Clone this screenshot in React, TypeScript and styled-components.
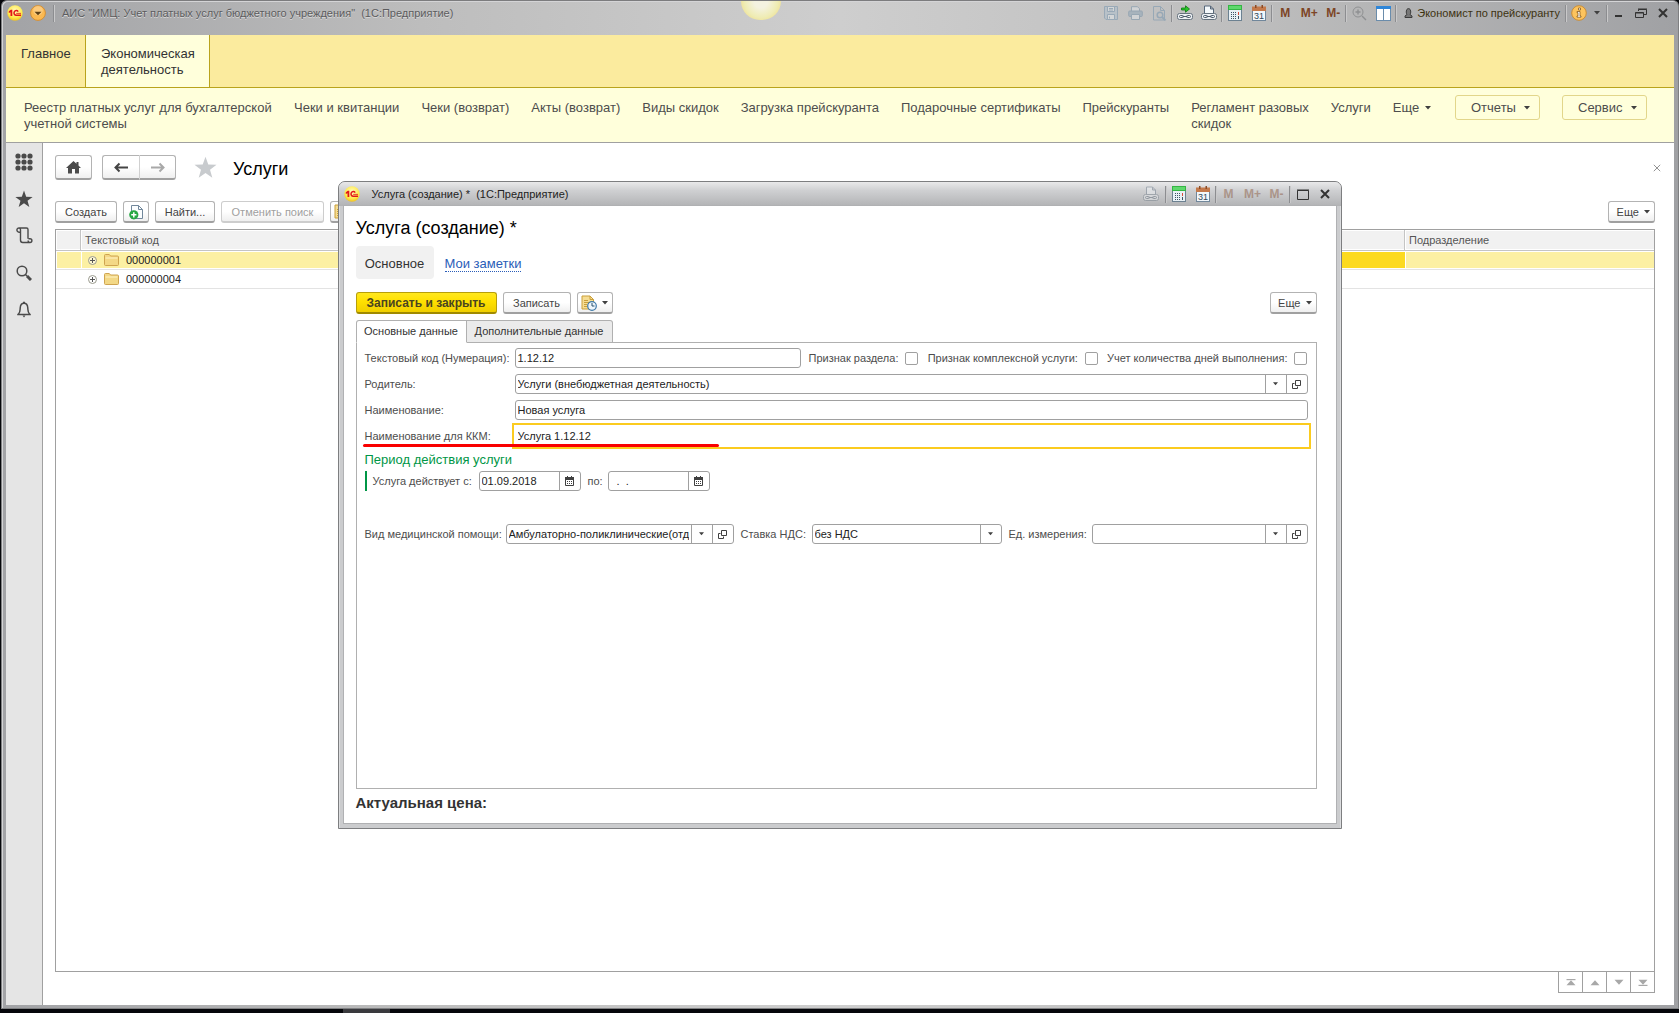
import React from "react";
import styled, { createGlobalStyle, css } from "styled-components";

const Global = createGlobalStyle`
  * { box-sizing: border-box; }
  body { margin: 0; background: #05060a; }
  body, button, input, select, table {
    font-family: "Liberation Sans", Arial, sans-serif;
    font-size: 11px;
    line-height: 14px;
    color: #404040;
  }
  button { padding: 0; margin: 0; background: none; border: 0; }
`;

/* ---------- window frame ---------- */

const Desktop = styled.div`
  position: relative;
  min-height: 100vh;
  padding: 0 0 4px 1px;
  display: flex;
  background: linear-gradient(#3a3a3e, #3a3a3e) 343px 100% / 47px 4px no-repeat, #05060a;
`;

const AppWindow = styled.div`
  position: relative;
  flex: 1;
  min-width: 0;
  display: flex;
  flex-direction: column;
  padding: 0 4px 3px 4px;
  border: 1px solid #7f8082;
  border-top-color: #7c7c7e;
  border-radius: 6px 6px 0 0;
  background: linear-gradient(90deg, #a2a3a6 0%, #bdbdbd 25%, #cecece 50%, #bdbdbd 75%, #a0a1a4 100%);
  box-shadow: inset 1px 1px 0 #d4d4d6;
`;

const TitleBar = styled.header`
  height: 34px;
  flex: none;
  display: flex;
  align-items: flex-start;
  padding-left: 1px;
`;

const TitleLeft = styled.div`
  flex: 1;
  min-width: 0;
  height: 24px;
  display: flex;
  align-items: center;
  gap: 7px;
`;

const TitleText = styled.span`
  color: #5c5c5e;
  white-space: pre;
  text-shadow: 0 1px 0 #d8d8d8;
`;

const Tools = styled.div`
  display: flex;
  align-items: center;
  height: 24px;
`;

const ToolButton = styled.button<{ $dim?: boolean; $w?: number }>`
  width: ${(p) => p.$w ?? 24}px;
  height: 22px;
  display: flex;
  align-items: center;
  justify-content: center;
  opacity: ${(p) => (p.$dim ? 0.4 : 1)};
`;

const MemoryButton = styled(ToolButton)`
  font-size: 12px;
  font-weight: bold;
  color: #7d4526;
`;

const Divider = styled.span`
  width: 2px;
  height: 17px;
  background: #8c8d90;
  border-right: 1px solid #c9c9ca;
`;

const UserButton = styled.button`
  display: flex;
  align-items: center;
  gap: 4px;
  padding: 0 5px 0 7px;
  color: #3d3210;
  white-space: nowrap;
`;

const InfoButton = styled.button`
  display: flex;
  align-items: center;
  gap: 6px;
  padding: 0 5px 0 4px;
`;

const Ball = styled.span`
  position: absolute;
  top: 0;
  left: calc(45% - 15px);
  width: 40px;
  height: 19px;
  border-radius: 0 0 20px 20px;
  background: radial-gradient(circle at 50% 0, #f4f2e0 0 25%, #efecb4 60%, #eedc8c 85%, #e6bd4c 100%);
`;

const Client = styled.div`
  flex: 1;
  display: flex;
  flex-direction: column;
  background: #fff;
`;

/* ---------- section and command panels ---------- */

const Sections = styled.nav`
  display: flex;
  height: 53px;
  background: #fbeb9e;
  border-bottom: 1px solid #b9a31c;
`;

const Section = styled.button<{ $active?: boolean; $w: number }>`
  width: ${(p) => p.$w}px;
  padding: 11px 15px 0 15px;
  display: flex;
  align-items: flex-start;
  text-align: left;
  font-size: 13px;
  line-height: 16px;
  color: #333;
  border-right: 1px solid #b9a31c;
  background: ${(p) => (p.$active ? "#ffffdb" : "transparent")};
`;

const Commands = styled.nav`
  display: flex;
  align-items: flex-start;
  gap: 22px;
  height: 55px;
  padding: 7px 27px 0 18px;
  background: #ffffdb;
  border-bottom: 1px solid #a0a0a0;
`;

const Command = styled.a<{ $w?: number }>`
  flex: none;
  ${(p) => p.$w && css`width: ${p.$w}px;`}
  padding-top: 5px;
  font-size: 13px;
  line-height: 16px;
  color: #4d4d4d;
  text-decoration: none;
  white-space: pre-line;
`;

const CommandMore = styled.button`
  flex: none;
  display: flex;
  align-items: center;
  gap: 6px;
  padding-top: 5px;
  font-size: 13px;
  line-height: 16px;
  color: #4d4d4d;
`;

const CommandMenus = styled.div`
  flex: 1;
  display: flex;
  justify-content: flex-end;
  gap: 22px;
`;

const CommandMenu = styled.button`
  height: 25px;
  width: 85px;
  flex: none;
  display: flex;
  align-items: center;
  justify-content: space-between;
  padding: 0 9px 0 15px;
  font-size: 13px;
  line-height: 16px;
  color: #4d4d4d;
  border: 1px solid #e2d68a;
  border-radius: 3px;
`;

/* ---------- work area ---------- */

const Body = styled.div`
  flex: 1;
  display: flex;
`;

const SideBar = styled.aside`
  width: 37px;
  flex: none;
  display: flex;
  flex-direction: column;
  align-items: center;
  padding-top: 8px;
  gap: 16px;
  background: #e5e5e5;
  border-right: 1px solid #a0a0a0;
`;

const SideButton = styled.button`
  width: 22px;
  height: 21px;
  display: flex;
  align-items: center;
  justify-content: center;
`;

const Page = styled.main`
  flex: 1;
  min-width: 0;
  display: flex;
  flex-direction: column;
  padding: 12px 19px 12px 12px;
`;

const PageHeader = styled.div`
  display: flex;
  align-items: center;
  height: 25px;
  margin-right: -6px;
`;

const Title = styled.h1`
  margin: 0;
  font-size: 18px;
  line-height: 22px;
  font-weight: normal;
  color: #000;
`;

const PageTitle = styled(Title)`
  flex: 1;
  padding: 2px 0 0 16px;
`;

const Button = styled.button<{ $w?: number; $tall?: boolean; $primary?: boolean; $split?: boolean }>`
  width: ${(p) => (p.$w ? `${p.$w}px` : "auto")};
  height: ${(p) => (p.$tall ? 25 : 22)}px;
  flex: none;
  display: inline-flex;
  align-items: center;
  justify-content: ${(p) => (p.$split ? "flex-end" : "center")};
  padding-right: ${(p) => (p.$split ? 4 : 0)}px;
  gap: ${(p) => (p.$split ? 5 : 0)}px;
  white-space: nowrap;
  color: #444;
  background: linear-gradient(#fff 0%, #fff 50%, #efefef 100%);
  border: 1px solid #b3b3b3;
  border-bottom: 2px solid #a0a0a0;
  border-radius: 3px;
  &:disabled {
    color: #a0a0a0;
    border-color: #cdcdcd;
  }
  ${(p) =>
    p.$primary &&
    css`
      font-size: 12px;
      font-weight: bold;
      color: #4a4420;
      background: linear-gradient(#ffe81f, #ffe000 45%, #f0cf00);
      border-color: #b79f0a;
      border-bottom-color: #a08a00;
    `}
`;

const HistoryGroup = styled.div`
  display: flex;
  margin-left: 10px;
  margin-right: 18px;
  ${Button} + ${Button} {
    border-left: 0;
    border-radius: 0 3px 3px 0;
  }
  ${Button}:first-child {
    border-radius: 3px 0 0 3px;
    border-right-color: #d0d0d0;
  }
`;

const CommandBar = styled.div`
  display: flex;
  gap: 6px;
`;

const ListBar = styled(CommandBar)`
  margin: 21px 0 6px;
`;

const Spring = styled.span`
  flex: 1;
`;

const ListFrame = styled.div`
  flex: 1;
  border: 1px solid #a0a0a0;
`;

const List = styled.table`
  width: 100%;
  table-layout: fixed;
  border-collapse: separate;
  border-spacing: 0;
`;

const Head = styled.th`
  height: 21px;
  padding: 1px 0 1px 1px;
  text-align: left;
  font-weight: normal;
  color: #555;
  background: #f1f1f1;
  background-clip: content-box;
  border-bottom: 1px solid #c4c4c4;
  border-right: 1px solid #c4c4c4;
  &:last-child { border-right: 0; }
`;

const CellInner = styled.div<{ $pad?: number }>`
  height: 100%;
  display: flex;
  align-items: center;
  padding-left: ${(p) => p.$pad ?? 3}px;
`;

const HeadInner = styled(CellInner)`
  height: 18px;
`;

const Cell = styled.td<{ $tone?: string }>`
  height: 19px;
  padding: 1px 0 1px 1px;
  background: ${(p) => p.$tone ?? "#fff"};
  background-clip: content-box;
  border-bottom: 1px solid #e3e3e3;
  color: #222;
`;

const RowInner = styled(CellInner)`
  height: 16px;
  gap: 7px;
`;

const Pager = styled.div`
  align-self: flex-end;
  display: flex;
  height: 21px;
  border: 1px solid #a0a0a0;
  border-top: 0;
`;

const PagerButton = styled.button`
  width: 24px;
  display: flex;
  align-items: center;
  justify-content: center;
  border-right: 1px solid #a0a0a0;
  &:last-child { border-right: 0; width: 23px; }
`;

/* ---------- dialog ---------- */

const Overlay = styled.div`
  position: absolute;
  inset: 0 0 3px 0;
  display: flex;
  align-items: center;
  justify-content: center;
`;

const Dialog = styled.section`
  width: 1004px;
  height: 648px;
  display: flex;
  flex-direction: column;
  padding: 0 5px 5px;
  border: 1px solid #7d7e80;
  border-radius: 7px 7px 0 0;
  background: #cbccce;
  box-shadow: inset 1px 0 0 #dcdddf, inset -1px 0 0 #dcdddf;
`;

const DialogBar = styled.header`
  height: 24px;
  flex: none;
  display: flex;
  align-items: center;
  margin: 0 -5px;
  padding: 0 6px 0 5px;
  border-radius: 6px 6px 0 0;
  background: linear-gradient(#e9e9ea, #cfd0d2 35%, #b2b3b5);
`;

const DialogTitle = styled.span`
  flex: 1;
  padding-left: 12px;
  color: #222;
  white-space: pre;
`;

const DialogBody = styled.div`
  flex: 1;
  display: flex;
  flex-direction: column;
  padding: 11px 19px 12px 12px;
  background: #fff;
  box-shadow: 0 0 0 1px #b0b1b3;
`;

const FormNav = styled.nav`
  display: flex;
  align-items: center;
  gap: 11px;
  margin: 7px 0 13px;
  font-size: 13px;
  line-height: 16px;
`;

const FormNavCurrent = styled.span`
  height: 33px;
  width: 78px;
  display: flex;
  align-items: center;
  justify-content: center;
  padding-top: 2px;
  color: #333;
  background: #f1f1f1;
  border-radius: 4px;
`;

const FormNavLink = styled.a`
  padding-top: 2px;
  color: #2a5db8;
  text-decoration: none;
  line-height: 15px;
  border-bottom: 1px dotted #2a5db8;
`;

const Tabs = styled.div`
  display: flex;
  margin-top: 6px;
`;

const Tab = styled.button<{ $active?: boolean; $w: number }>`
  width: ${(p) => p.$w}px;
  height: 23px;
  padding-bottom: 1px;
  color: #333;
  white-space: nowrap;
  border: 1px solid #b0b0b0;
  border-bottom-color: ${(p) => (p.$active ? "#fff" : "#b0b0b0")};
  border-left-width: ${(p) => (p.$active ? 1 : 0)}px;
  border-radius: ${(p) => (p.$active ? "3px 0 0 0" : "0 3px 0 0")};
  background: ${(p) => (p.$active ? "#fff" : "#ebebeb")};
  position: relative;
  z-index: 1;
`;

const Panel = styled.form`
  flex: 1;
  margin: -1px 0 0;
  padding: 5px 8px 8px;
  border: 1px solid #b0b0b0;
  display: flex;
  flex-direction: column;
  gap: 6px;
`;

const FormRow = styled.div`
  position: relative;
  display: flex;
  align-items: center;
  height: 20px;
`;

const Label = styled.label<{ $w?: number }>`
  width: ${(p) => (p.$w ? `${p.$w}px` : "auto")};
  flex: none;
  color: #4d4d4d;
  white-space: nowrap;
`;

const Field = styled.div<{ $w?: number }>`
  ${(p) => (p.$w ? css`width: ${p.$w}px; flex: none;` : css`flex: 1;`)}
  min-width: 0;
  height: 20px;
  display: flex;
  border: 1px solid #a0a0a0;
  border-radius: 3px;
  background: #fff;
  overflow: hidden;
`;

const bare = css`
  flex: 1;
  min-width: 0;
  width: 100%;
  margin: 0;
  padding: 0 2px;
  color: #222;
  background: transparent;
  border: 0;
  outline: 0;
`;

const TextInput = styled.input`
  ${bare}
`;

const Choice = styled.select`
  ${bare}
  appearance: none;
  text-overflow: clip;
`;

const FieldButton = styled.button`
  width: 21px;
  flex: none;
  display: flex;
  align-items: center;
  justify-content: center;
  border-left: 1px solid #a0a0a0;
`;

const FocusField = styled.div`
  flex: 1;
  height: 26px;
  margin: -3px;
  padding-left: 2px;
  display: flex;
  border: 2px solid #fbcb1f;
  background: #fff;
`;

const RedLine = styled.span`
  position: absolute;
  left: -2px;
  top: 18px;
  width: 356px;
  height: 3px;
  border-radius: 2px;
  background: #f90000;
`;

const Checks = styled.div`
  flex: 1;
  display: flex;
  justify-content: space-between;
  padding-left: 8px;
`;

const Check = styled.label`
  display: flex;
  align-items: center;
  gap: 7px;
  color: #4d4d4d;
  white-space: nowrap;
`;

const CheckBox = styled.input`
  appearance: none;
  width: 13px;
  height: 13px;
  margin: 0;
  border: 1px solid #a0a0a0;
  border-radius: 2px;
  background: #fff;
`;

const Group = styled.fieldset`
  margin: 0 0 27px;
  padding: 0;
  border: 0;
`;

const GroupTitle = styled.legend`
  padding: 0;
  margin: 2px 0 3px;
  font-size: 13px;
  line-height: 16px;
  color: #009646;
`;

const Period = styled.div`
  display: flex;
  align-items: center;
  height: 20px;
  padding-left: 6px;
  border-left: 2px solid #009646;
`;

const Price = styled.p`
  margin: 6px 0 0;
  font-size: 15px;
  line-height: 16px;
  font-weight: bold;
  color: #333;
`;

const Spacer = styled.span`
  width: 7px;
  flex: none;
`;

/* ---------- drawings ---------- */

const Caret = ({ c = "#404040", w = 6 }: { c?: string; w?: number }) => (
  <svg width={w} height="4" viewBox="0 0 6 4" aria-hidden="true">
    <path d="M0 0h6L3 3.6z" fill={c} />
  </svg>
);

const Logo = () => (
  <svg width="16" height="16" viewBox="0 0 16 16" aria-hidden="true">
    <defs>
      <radialGradient id="logoFill" cx="50%" cy="35%" r="65%">
        <stop offset="0" stopColor="#fffbc0" />
        <stop offset="0.7" stopColor="#ffe94a" />
        <stop offset="1" stopColor="#efc024" />
      </radialGradient>
    </defs>
    <circle cx="8" cy="8" r="7.7" fill="url(#logoFill)" />
    <path d="M1.800 6.300 3.800 4.800h1.500v6.200H3.500V7.200L1.800 8.100z" fill="#e2161a" />
    <path d="M11.200 6.600A2.300 2.300 0 1 0 9.200 10.200H14" fill="none" stroke="#e2161a" strokeWidth="1.500" />
    <path d="M9.200 8.400H14" fill="none" stroke="#e2161a" strokeWidth=".8" />
  </svg>
);

const RoundMenu = () => (
  <svg width="16" height="16" viewBox="0 0 16 16" aria-hidden="true">
    <circle cx="8" cy="8" r="7.4" fill="#fbb951" stroke="#d48f35" />
    <circle cx="8" cy="5.5" r="4.8" fill="#fff" opacity="0.25" />
    <path d="M4.500 6.800h7L8 10.300z" fill="#5d4016" />
  </svg>
);

const SaveIcon = () => (
  <svg width="14" height="14" viewBox="0 0 14 14" fill="none" stroke="#5b84a6" aria-hidden="true">
    <path d="M.5.5h13v13H2l-1.500-1.500z" fill="#a9bfd0" />
    <path d="M3.500.5v5h7v-5zM3.500 13.500v-5h7v5z" fill="#eef3f7" />
    <path d="M5 2.500h4M5 4h4M5.500 10.500v2" />
  </svg>
);

const PrintIcon = () => (
  <svg width="15" height="14" viewBox="0 0 15 14" fill="none" stroke="#5b7f9e" aria-hidden="true">
    <path d="M3.500 5V.7h6l2 2V5" fill="#e8eef3" />
    <rect x=".7" y="5" width="13.600" height="5.500" rx="1" fill="#7f9db5" />
    <path d="M3.500 8.500h8v5h-8z" fill="#e8eef3" />
  </svg>
);

const PreviewIcon = () => (
  <svg width="15" height="15" viewBox="0 0 15 15" fill="none" stroke="#5b84a6" aria-hidden="true">
    <path d="M1.500.5h7l4 4v9.500h-11zM8.500.5v4h4" />
    <circle cx="8" cy="9" r="2.800" strokeWidth="1.500" />
    <path d="m10 11 3.500 3.500" strokeWidth="1.800" />
  </svg>
);

const LinkPrintIcon = ({ arrow }: { arrow?: boolean }) => (
  <svg width="16" height="16" viewBox="0 0 16 16" fill="none" aria-hidden="true">
    {arrow ? (
      <path d="M4.500 3h4V.8L12.500 4 8.500 7.200V5h-4z" fill="#2ac52a" stroke="#0b7a10" strokeWidth=".8" />
    ) : (
      <path d="M3.500 8V1h6l3 3v4M9.500 1v3h3" fill="#f4f8fb" stroke="#56677a" />
    )}
    <rect x=".500" y="8.500" width="15" height="6" rx="2" fill="#eef1f4" stroke="#66737f" />
    <rect x="2.500" y="10.500" width="4" height="2" rx="1" stroke="#4e5d6c" />
    <rect x="9.500" y="10.500" width="4" height="2" rx="1" stroke="#4e5d6c" />
    <path d="M5.500 11.500h5" stroke="#4e5d6c" />
  </svg>
);

const CalculatorIcon = () => (
  <svg width="14" height="16" viewBox="0 0 14 16" aria-hidden="true">
    <rect x=".5" y=".5" width="13" height="15" fill="#e9f1f6" stroke="#6c8191" />
    <rect x="0" y="0" width="14" height="5" fill="#35b544" />
    <rect x="1" y="1" width="12" height="3" fill="#5fd86c" />
    {[7, 9, 11, 13].map((y) =>
      [3, 5, 7].map((x) => <rect key={`${x}-${y}`} x={x} y={y} width="1" height="1" fill="#3d5364" />)
    )}
    <rect x="10" y="7" width="1" height="3" fill="#d94b3c" />
    <rect x="10" y="11" width="1" height="3" fill="#3d5364" />
  </svg>
);

const CalendarIcon = () => (
  <svg width="14" height="16" viewBox="0 0 14 16" aria-hidden="true">
    <rect x=".5" y="2.500" width="13" height="13" fill="#f2f7fb" stroke="#71879b" />
    <path d="M0 1.500h14V6H0z" fill="#c4794b" />
    <path d="M3 0h1.500v3H3zM9.500 0H11v3H9.500z" fill="#8b4b25" />
    <text x="7" y="14" textAnchor="middle" fontSize="9" fill="#33475a" fontFamily="Liberation Sans">31</text>
  </svg>
);

const ZoomIcon = () => (
  <svg width="15" height="15" viewBox="0 0 15 15" fill="none" stroke="#55585c" aria-hidden="true">
    <circle cx="6" cy="6" r="5" />
    <path d="M3.500 6h5M6 3.500v5M10 10l4 4" strokeWidth="1.400" />
  </svg>
);

const PanesIcon = () => (
  <svg width="15" height="15" viewBox="0 0 15 15" aria-hidden="true">
    <rect x=".5" y=".5" width="14" height="14" fill="#fff" stroke="#6a8cab" />
    <rect width="15" height="3" fill="#2f86d8" />
    <path d="M7.500 3v12" stroke="#6a8cab" />
  </svg>
);

const PersonIcon = () => (
  <svg width="9" height="10" viewBox="0 0 9 10" fill="#777" stroke="#3c3c3c" aria-hidden="true">
    <path d="M1 9.500V8l2-1.500C1.800 5 2 .6 4.500.6S7.200 5 6 6.500L8 8v1.500z" />
  </svg>
);

const InfoIcon = () => (
  <svg width="16" height="16" viewBox="0 0 16 16" aria-hidden="true">
    <circle cx="8" cy="8" r="7.300" fill="#fdc45e" stroke="#cc8d34" />
    <path d="M7.500 3h2v2h-2zM6 6.500h3v4.500h1v1.200H6V11h1V7.700H6z" fill="#fff" stroke="#7a4e12" strokeWidth=".7" />
  </svg>
);

const MinimizeIcon = () => (
  <svg width="12" height="12" viewBox="0 0 12 12" aria-hidden="true"><path d="M2 8h7v2H2z" fill="#333" /></svg>
);

const RestoreIcon = () => (
  <svg width="12" height="12" viewBox="0 0 12 12" fill="none" stroke="#333" aria-hidden="true">
    <path d="M3.500 4V2.500h8v5H9M3 2h9" />
    <path d="M.5 5.500h8v5h-8zM.5 6h8" />
  </svg>
);

const MaximizeIcon = () => (
  <svg width="12" height="11" viewBox="0 0 12 11" fill="none" stroke="#333" aria-hidden="true">
    <path d="M.5 1.500h11v9H.5zM0 1h12" />
  </svg>
);

const CrossIcon = ({ size = 10, c = "#333", s = 2 }: { size?: number; c?: string; s?: number }) => (
  <svg width={size} height={size} viewBox="0 0 10 10" fill="none" stroke={c} strokeWidth={s} aria-hidden="true">
    <path d="m1 1 8 8M9 1 1 9" />
  </svg>
);

const Star = ({ size, c }: { size: number; c: string }) => (
  <svg width={size} height={size} viewBox="0 0 24 24" aria-hidden="true">
    <path d="m12 .8 2.900 8.100 8.600.3-6.800 5.200 2.400 8.300L12 17.800l-7.100 4.900 2.400-8.300L.5 9.200l8.600-.3z" fill={c} />
  </svg>
);

const GridIcon = () => (
  <svg width="18" height="18" viewBox="0 0 18 18" fill="#4a4a4a" aria-hidden="true">
    {[3, 9, 15].map((y) => [3, 9, 15].map((x) => <circle key={`${x}-${y}`} cx={x} cy={y} r="2.600" />))}
  </svg>
);

const ScrollIcon = () => (
  <svg width="17" height="17" viewBox="0 0 17 17" fill="none" stroke="#4a4a4a" strokeWidth="1.400" aria-hidden="true">
    <path d="M4.500 5.200H3A2.100 2.100 0 1 1 3 1h7.500q1.500 0 1.500 1.500v9.300M3 1q1.500 0 1.500 1.700V13q0 2.500 2.200 2.500H14a1.900 1.900 0 0 0 0-3.800h-1.500M14 15.500q-1.800 0-1.900-2" />
  </svg>
);

const SearchIcon = () => (
  <svg width="16" height="16" viewBox="0 0 16 16" fill="none" stroke="#4a4a4a" aria-hidden="true">
    <circle cx="6" cy="6" r="4.800" strokeWidth="1.500" />
    <path d="m9.500 9.500 1.500 1.500" strokeWidth="1.500" />
    <path d="m11 11 4 4" strokeWidth="3" />
  </svg>
);

const BellIcon = () => (
  <svg width="16" height="17" viewBox="0 0 16 17" fill="none" stroke="#4a4a4a" strokeWidth="1.500" aria-hidden="true">
    <path d="M1.200 13.500h13.600M2.500 13c1.700-1.700 1.500-3 1.700-6C4.400 4 6 2.300 8 2.300S11.600 4 11.800 7c.2 3 0 4.300 1.700 6" />
    <path d="M7 .8h2v1.500H7zM6.500 14.500h3L8 16.500z" fill="#4a4a4a" stroke="none" />
  </svg>
);

const HomeIcon = () => (
  <svg width="15" height="13" viewBox="0 0 15 13" fill="#4a4a4a" aria-hidden="true">
    <path d="M7.500 0 0 7h2v5.500h4V8h3v4.500h4V7h2l-2.500-2.400V1H10.500v1.800z" />
  </svg>
);

const ArrowIcon = ({ right }: { right?: boolean }) => (
  <svg width="14" height="11" viewBox="0 0 14 11" fill="none" stroke={right ? "#a8a8a8" : "#444"} strokeWidth="2" aria-hidden="true">
    <path d={right ? "M0 5.500h12M8.500 1.500 12.500 5.500 8.500 9.500" : "M14 5.500H2M5.500 1.500 1.500 5.500 5.500 9.500"} />
  </svg>
);

const NewCopyIcon = () => (
  <svg width="14" height="16" viewBox="0 0 14 16" aria-hidden="true">
    <path d="M2.500 1.500h7l4 4v9h-11z" fill="#fbfdfe" stroke="#71879b" />
    <path d="M9.500 1.500v4h4" fill="none" stroke="#71879b" />
    <circle cx="4.800" cy="10.800" r="4.600" fill="#27a844" />
    <path d="M4.800 8.200v5.200M2.200 10.800h5.200" stroke="#fff" strokeWidth="1.500" />
  </svg>
);

const HistoryDocIcon = () => (
  <svg width="16" height="16" viewBox="0 0 16 16" aria-hidden="true">
    <path d="M1 1h8l3.500 3.500V14H1z" fill="#f6dd93" stroke="#c99f3b" />
    <path d="M9 1v3.500h3.500M3 5.500h4M3 7.500h6M3 9.500h3M3 11.500h3" fill="none" stroke="#c99f3b" />
    <circle cx="11" cy="11" r="4.300" fill="#eef6fc" stroke="#3f79a8" strokeWidth="1.200" />
    <path d="M11 8v3h2.500" fill="none" stroke="#27506f" />
  </svg>
);

const FolderIcon = () => (
  <svg width="15" height="12" viewBox="0 0 15 12" aria-hidden="true">
    <path d="M.5 1.500q0-1 1-1h3.800l1.300 1.500h6.900q1 0 1 1v7.500q0 1-1 1h-12q-1 0-1-1z" fill="#f3d886" stroke="#cfa450" />
    <path d="M1.500 4h12" stroke="#fff3c4" />
  </svg>
);

const ExpandIcon = () => (
  <svg width="9" height="9" viewBox="0 0 9 9" fill="none" aria-hidden="true">
    <circle cx="4.500" cy="4.500" r="4" stroke="#9a9a8c" fill="#fff" fillOpacity=".5" />
    <path d="M2 4.500h5M4.500 2v5" stroke="#555" />
  </svg>
);

const OpenIcon = () => (
  <svg width="10" height="9" viewBox="0 0 10 9" fill="none" stroke="#404040" aria-hidden="true">
    <path d="M3.500.5h5v5h-5zM2.500 3.500h-2v5h5v-2" />
  </svg>
);

const DateIcon = () => (
  <svg width="9" height="10" viewBox="0 0 9 10" aria-hidden="true">
    <path d="M.5 2v7.500h8V2z" fill="#fff" stroke="#404040" />
    <path d="M0 1h9v3H0zM2 0h1v2H2zM6 0h1v2H6z" fill="#404040" />
    <path d="M2 5.500h1M4 5.500h1M6 5.500h1M2 7.500h1M4 7.500h1M6 7.500h1" stroke="#404040" />
  </svg>
);

const PagerIcon = ({ up, edge }: { up?: boolean; edge?: boolean }) => (
  <svg width="10" height="7" viewBox="0 0 10 7" fill="#a8a8a8" aria-hidden="true">
    <g transform={up ? undefined : "rotate(180 5 3.5)"}>
      <path d="M.5 6.200h9L5 1.200z" />
      {edge && <path d="M.5 0h9v1.200h-9z" />}
    </g>
  </svg>
);

/* ---------- screen ---------- */

const MEMORY = ["M", "M+", "M-"];

const commands: { text: string; width?: number }[] = [
  { text: "Реестр платных услуг для бухгалтерской\nучетной системы", width: 248 },
  { text: "Чеки и квитанции" },
  { text: "Чеки (возврат)" },
  { text: "Акты (возврат)" },
  { text: "Виды скидок" },
  { text: "Загрузка прейскуранта" },
  { text: "Подарочные сертификаты" },
  { text: "Прейскуранты" },
  { text: "Регламент разовых\nскидок" },
  { text: "Услуги" },
];

const DialogWindow = () => (
  <Dialog role="dialog" aria-label="Услуга (создание)">
    <DialogBar>
      <Logo />
      <DialogTitle>{"Услуга (создание) *  (1С:Предприятие)"}</DialogTitle>
      <Tools>
        <ToolButton $dim $w={27} aria-label="Печать"><LinkPrintIcon /></ToolButton>
        <Divider />
        <ToolButton aria-label="Калькулятор"><CalculatorIcon /></ToolButton>
        <ToolButton aria-label="Календарь"><CalendarIcon /></ToolButton>
        <Divider />
        {MEMORY.map((m) => <MemoryButton key={m} $dim>{m}</MemoryButton>)}
        <Divider />
        <ToolButton aria-label="Развернуть"><MaximizeIcon /></ToolButton>
        <ToolButton $w={20} aria-label="Закрыть"><CrossIcon /></ToolButton>
      </Tools>
    </DialogBar>
    <DialogBody>
      <Title as="h2">Услуга (создание) *</Title>
      <FormNav>
        <FormNavCurrent>Основное</FormNavCurrent>
        <FormNavLink href="#notes">Мои заметки</FormNavLink>
      </FormNav>
      <CommandBar>
        <Button $primary $w={141}>Записать и закрыть</Button>
        <Button $w={68}>Записать</Button>
        <Button $w={36} $split aria-label="История"><HistoryDocIcon /><Caret /></Button>
        <Spring />
        <Button $w={47} $split>Еще<Caret /></Button>
      </CommandBar>
      <Tabs>
        <Tab $active $w={111}>Основные данные</Tab>
        <Tab $w={146}>Дополнительные данные</Tab>
      </Tabs>
      <Panel>
        <FormRow>
          <Label $w={150} htmlFor="code">Текстовый код (Нумерация):</Label>
          <Field $w={286}><TextInput id="code" defaultValue="1.12.12" /></Field>
          <Checks>
            {["Признак раздела:", "Признак комплексной услуги:", "Учет количества дней выполнения:"].map((t) => (
              <Check key={t}>{t}<CheckBox type="checkbox" /></Check>
            ))}
          </Checks>
        </FormRow>
        <FormRow>
          <Label $w={150} htmlFor="parent">Родитель:</Label>
          <Field>
            <Choice id="parent"><option>Услуги (внебюджетная деятельность)</option></Choice>
            <FieldButton type="button" aria-label="Выбрать"><Caret w={5} /></FieldButton>
            <FieldButton type="button" aria-label="Открыть"><OpenIcon /></FieldButton>
          </Field>
        </FormRow>
        <FormRow>
          <Label $w={150} htmlFor="name">Наименование:</Label>
          <Field><TextInput id="name" defaultValue="Новая услуга" /></Field>
        </FormRow>
        <FormRow>
          <Label $w={150} htmlFor="kkm">Наименование для ККМ:</Label>
          <FocusField><TextInput id="kkm" defaultValue="Услуга 1.12.12" /></FocusField>
          <RedLine />
        </FormRow>
        <Group>
          <GroupTitle>Период действия услуги</GroupTitle>
          <Period>
            <Label $w={106} htmlFor="from">Услуга действует с:</Label>
            <Field $w={102}>
              <TextInput id="from" defaultValue="01.09.2018" />
              <FieldButton type="button" aria-label="Календарь"><DateIcon /></FieldButton>
            </Field>
            <Spacer />
            <Label $w={20} htmlFor="to">по:</Label>
            <Field $w={102}>
              <TextInput id="to" defaultValue="  .  ." />
              <FieldButton type="button" aria-label="Календарь"><DateIcon /></FieldButton>
            </Field>
          </Period>
        </Group>
        <FormRow>
          <Label $w={141} htmlFor="kind">Вид медицинской помощи:</Label>
          <Field $w={228}>
            <Choice id="kind"><option>Амбулаторно-поликлинические(отделения)</option></Choice>
            <FieldButton type="button" aria-label="Выбрать"><Caret w={5} /></FieldButton>
            <FieldButton type="button" aria-label="Открыть"><OpenIcon /></FieldButton>
          </Field>
          <Spacer />
          <Label $w={71} htmlFor="vat">Ставка НДС:</Label>
          <Field $w={190}>
            <Choice id="vat"><option>без НДС</option></Choice>
            <FieldButton type="button" aria-label="Выбрать"><Caret w={5} /></FieldButton>
          </Field>
          <Spacer />
          <Label $w={83} htmlFor="unit">Ед. измерения:</Label>
          <Field>
            <Choice id="unit"><option></option></Choice>
            <FieldButton type="button" aria-label="Выбрать"><Caret w={5} /></FieldButton>
            <FieldButton type="button" aria-label="Открыть"><OpenIcon /></FieldButton>
          </Field>
        </FormRow>
      </Panel>
      <Price>Актуальная цена:</Price>
    </DialogBody>
  </Dialog>
);

const rows = [
  { code: "000000001", current: true },
  { code: "000000004", current: false },
];

export default function App() {
  return (
    <Desktop>
      <Global />
      <AppWindow>
        <Ball />
        <TitleBar>
          <TitleLeft>
            <Logo />
            <ToolButton $w={16} aria-label="Меню"><RoundMenu /></ToolButton>
            <Divider />
            <TitleText>{'АИС "ИМЦ: Учет платных услуг бюджетного учреждения"  (1С:Предприятие)'}</TitleText>
          </TitleLeft>
          <Tools>
            <ToolButton $dim aria-label="Сохранить"><SaveIcon /></ToolButton>
            <ToolButton $dim aria-label="Печать"><PrintIcon /></ToolButton>
            <ToolButton $dim aria-label="Просмотр"><PreviewIcon /></ToolButton>
            <Divider />
            <ToolButton aria-label="Перейти по ссылке"><LinkPrintIcon arrow /></ToolButton>
            <ToolButton aria-label="Получить ссылку"><LinkPrintIcon /></ToolButton>
            <Divider />
            <ToolButton aria-label="Калькулятор"><CalculatorIcon /></ToolButton>
            <ToolButton aria-label="Календарь"><CalendarIcon /></ToolButton>
            <Divider />
            {MEMORY.map((m) => <MemoryButton key={m}>{m}</MemoryButton>)}
            <Divider />
            <ToolButton $dim aria-label="Масштаб"><ZoomIcon /></ToolButton>
            <ToolButton aria-label="Панели"><PanesIcon /></ToolButton>
            <Divider />
            <UserButton><PersonIcon />Экономист по прейскуранту</UserButton>
            <Divider />
            <InfoButton aria-label="Справка"><InfoIcon /><Caret w={8} /></InfoButton>
            <Divider />
            <ToolButton $w={22} aria-label="Свернуть"><MinimizeIcon /></ToolButton>
            <ToolButton $w={22} aria-label="Восстановить"><RestoreIcon /></ToolButton>
            <ToolButton $w={22} aria-label="Закрыть"><CrossIcon /></ToolButton>
          </Tools>
        </TitleBar>
        <Client>
          <Sections>
            <Section $w={80}>Главное</Section>
            <Section $w={124} $active>Экономическая деятельность</Section>
          </Sections>
          <Commands>
            {commands.map((c) => (
              <Command key={c.text} href="#" $w={c.width}>{c.text}</Command>
            ))}
            <CommandMore>Еще<Caret /></CommandMore>
            <CommandMenus>
              <CommandMenu>Отчеты<Caret /></CommandMenu>
              <CommandMenu>Сервис<Caret /></CommandMenu>
            </CommandMenus>
          </Commands>
          <Body>
            <SideBar>
              <SideButton aria-label="Меню функций"><GridIcon /></SideButton>
              <SideButton aria-label="Избранное"><Star size={18} c="#4a4a4a" /></SideButton>
              <SideButton aria-label="История"><ScrollIcon /></SideButton>
              <SideButton aria-label="Поиск"><SearchIcon /></SideButton>
              <SideButton aria-label="Оповещения"><BellIcon /></SideButton>
            </SideBar>
            <Page>
              <PageHeader>
                <Button $tall $w={37} aria-label="Домой"><HomeIcon /></Button>
                <HistoryGroup>
                  <Button $tall $w={38} aria-label="Назад"><ArrowIcon /></Button>
                  <Button $tall $w={36} aria-label="Вперед"><ArrowIcon right /></Button>
                </HistoryGroup>
                <Star size={23} c="#c8cbce" />
                <PageTitle>Услуги</PageTitle>
                <button aria-label="Закрыть"><CrossIcon size={8} c="#777" s={1} /></button>
              </PageHeader>
              <ListBar>
                <Button $w={62}>Создать</Button>
                <Button $w={26} aria-label="Создать копированием"><NewCopyIcon /></Button>
                <Button $w={60}>Найти...</Button>
                <Button $w={103} disabled>Отменить поиск</Button>
                <Button $w={36} $split aria-label="История"><HistoryDocIcon /><Caret /></Button>
                <Spring />
                <Button $w={47} $split>Еще<Caret /></Button>
              </ListBar>
              <ListFrame>
                <List>
                  <colgroup>
                    <col style={{ width: 25 }} />
                    <col />
                    <col style={{ width: 300 }} />
                    <col style={{ width: 249 }} />
                  </colgroup>
                  <thead>
                    <tr>
                      <Head><HeadInner /></Head>
                      <Head><HeadInner>Текстовый код</HeadInner></Head>
                      <Head><HeadInner /></Head>
                      <Head><HeadInner>Подразделение</HeadInner></Head>
                    </tr>
                  </thead>
                  <tbody>
                    {rows.map((r) => {
                      const tone = r.current ? "#fcf0a3" : undefined;
                      return (
                        <tr key={r.code}>
                          <Cell $tone={tone}><RowInner /></Cell>
                          <Cell $tone={tone}>
                            <RowInner $pad={6}><ExpandIcon /><FolderIcon />{r.code}</RowInner>
                          </Cell>
                          <Cell $tone={r.current ? "#fcda20" : undefined}><RowInner /></Cell>
                          <Cell $tone={tone}><RowInner /></Cell>
                        </tr>
                      );
                    })}
                  </tbody>
                </List>
              </ListFrame>
              <Pager>
                <PagerButton aria-label="В начало"><PagerIcon up edge /></PagerButton>
                <PagerButton aria-label="Выше"><PagerIcon up /></PagerButton>
                <PagerButton aria-label="Ниже"><PagerIcon /></PagerButton>
                <PagerButton aria-label="В конец"><PagerIcon edge /></PagerButton>
              </Pager>
            </Page>
          </Body>
        </Client>
      </AppWindow>
      <Overlay><DialogWindow /></Overlay>
    </Desktop>
  );
}
